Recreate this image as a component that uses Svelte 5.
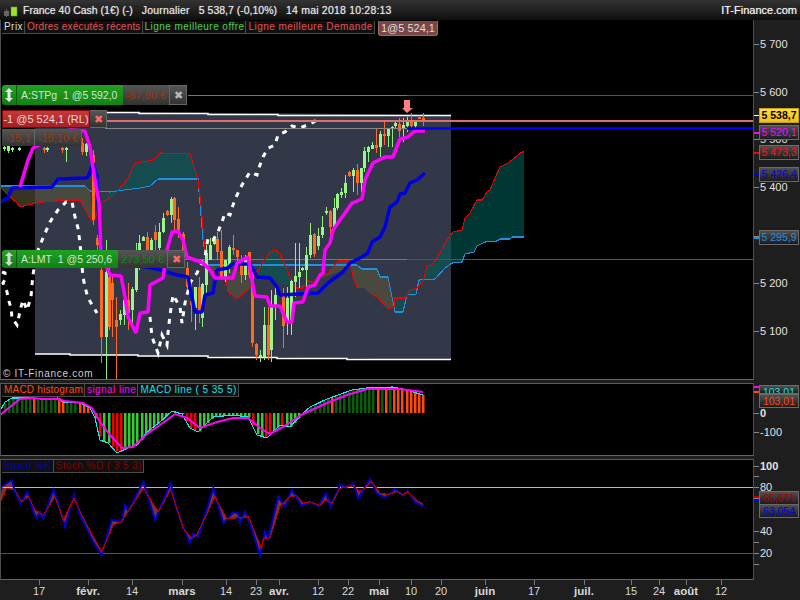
<script>
  const pl = (a) => a.map((p) => p.join(',')).join(' ');
  const senB = [[0,186],[85,186],[90,191],[110,192],[116,191],[140,188],[150,186],[158,179],[198,179],[200,203],[203,240],[207,265],[357,265],[362,269],[377,269],[380,277],[388,277],[395,312],[403,312],[407,295],[416,294],[419,280],[435,279],[445,268],[452,263],[462,262],[465,254],[474,252],[477,246],[485,242],[497,241],[500,239],[510,239],[512,237],[524,237]];
  const senA = [[0,187],[8,195],[17,203],[20,207],[27,205],[43,202],[70,200],[80,200],[88,215],[93,222],[102,202],[110,198],[120,188],[128,178],[133,167],[135,163],[153,160],[160,153],[190,154],[195,170],[198,180],[201,205],[204,240],[207,265],[212,272],[225,272],[228,292],[237,299],[250,288],[255,275],[270,252],[275,250],[280,254],[287,270],[295,288],[303,288],[308,280],[315,284],[322,275],[328,273],[338,261],[350,261],[353,277],[357,287],[365,288],[370,293],[377,297],[388,309],[394,307],[395,298],[405,298],[410,290],[417,288],[423,282],[427,266],[432,265],[440,253],[447,240],[453,232],[462,230],[465,218],[470,213],[477,200],[482,200],[487,192],[490,190],[495,178],[500,167],[508,163],[522,152],[524,152]];
  const cloud = (a, b) => pl([...senA.filter((p) => p[0] >= a && p[0] <= b), ...senB.filter((p) => p[0] >= a && p[0] <= b).reverse()]);
  const clouds = [
    { pts: cloud(0, 94), teal: false }, { pts: cloud(94, 207), teal: true },
    { pts: cloud(207, 255), teal: false }, { pts: cloud(255, 295), teal: true },
    { pts: cloud(295, 394), teal: false }, { pts: cloud(394, 524), teal: true }
  ];
  const kijun = [[20,187],[28,160],[33,148],[70,130],[85,131],[90,147],[93,168],[99,203],[101,253],[110,275],[121,276],[125,297],[128,317],[136,333],[140,313],[148,312],[150,285],[163,278],[167,250],[172,232],[178,231],[183,240],[187,257],[203,263],[210,270],[215,278],[233,278],[237,263],[248,257],[252,280],[255,296],[267,297],[270,306],[280,306],[283,313],[287,322],[292,322],[294,303],[303,302],[308,287],[315,285],[320,275],[323,273],[325,250],[330,243],[333,230],[345,213],[352,203],[362,199],[365,180],[373,163],[385,157],[393,157],[400,139],[408,137],[415,131],[425,131]];
  const tenkan = [[0,202],[8,198],[12,188],[52,187],[58,179],[85,178],[88,177],[93,163],[97,177],[98,200],[100,237],[103,262],[140,266],[157,269],[177,275],[188,277],[195,312],[202,312],[205,295],[213,293],[217,270],[228,268],[232,264],[250,264],[257,277],[270,278],[277,287],[280,295],[318,293],[328,283],[343,272],[350,263],[362,257],[368,253],[372,242],[380,237],[385,227],[390,207],[397,202],[400,194],[405,193],[410,183],[417,180],[425,173]];
  const chikouA = [[2,272],[5,273],[6,278],[3,283],[7,292],[8,298],[11,308],[12,318],[17,325],[21,307],[23,300],[27,310],[31,297],[32,285],[33,275],[36,255],[43,238],[50,222],[58,210],[66,202],[72,202],[75,217],[78,228],[80,243],[83,277],[85,287],[88,298],[97,313]];
  const chikouB = [[150,317],[152,337],[158,353],[162,335],[167,345],[168,333],[170,315],[173,295],[180,307],[182,323],[185,303],[190,283],[197,273],[205,257],[208,238],[213,240],[218,232],[222,222],[225,213],[230,215],[233,205],[237,195],[242,185],[250,172],[257,175],[260,165],[263,157],[268,148],[275,145],[278,135],[285,132],[292,126],[300,128],[312,123],[320,118]];
  const top = [[35,111.5],[70,111.5],[70,112.5],[139,112.5],[139,113.5],[208,113.5],[208,114.5],[278,114.5],[278,115.5],[451,115.5]];
  const bottom = [[35,354],[70,354],[70,355],[138,355],[138,356],[208,356],[208,357.5],[277,357.5],[277,358.5],[347,358.5],[347,359.5],[451,359.5]];
  const area = pl([[35,111],[451,115],[451,360],[35,354]]);
  const candles = [
    [4,146,151,147,149,1],[8,143,153,145,151,1],[12,147,152,148,150,1],[19,147,151,148,150,1],[44,147,153,148,150,0],[47,147,152,148,150,1],[62,147,153,148,150,0],[66,147,162,148,150,1],[82,138,155,143,152,0],[86,143,156,144,152,1],
    [93,150,225,155,220,0],[97,235,250,238,245,0],[101,250,363,270,337,0],[105.7,240,380,272,337,1],[109,250,330,277,327,0],[112,277,337,283,300,0],[116,297,380,320,327,0],[120,310,325,314,320,1],[124,297,325,300,315,1],[128,283,330,300,313,0],[132,287,327,289,310,1],[136,243,292,268,290,1],[139,235,270,243,268,1],[143,236,241,237,241,1],[147,232,268,237,252,0],[151,238,255,240,250,1],[155,225,252,232,240,0],[159,223,252,232,248,1],[163,213,233,218,232,1],[167,210,216,211,215,0],[171,197,223,199,215,1],[174,197,230,198,220,0],[178,207,238,219,230,0],[183,232,262,234,250,0],[187,262,295,268,287,0],[191,283,322,301,305,0],[195,287,330,287,308,1],[199,277,323,287,313,0],[202,283,327,284,318,1],[206,245,293,253,285,1],[210,238,260,245,260,1],[214,238,245,239,244,1],[217,232,260,239,252,0],[221,230,280,251,277,0],[225,260,282,260,277,1],[229,245,273,247,265,1],[233,235,255,248,250,0],[237,250,262,250,257,0],[241,255,283,260,275,0],[245,255,280,258,275,1],[249,252,278,252,275,0],[252,270,347,273,343,0],[256,343,360,344,355,0],[260,350,362,355,357,1],[264,307,360,325,357,1],[268,307,360,325,355,0],[271,290,362,305,350,1],
    [275,288,320,295,305,1],[283,288,348,293,326,0],[287,287,335,298,323,1],[291,280,335,281,323,1],[295,243,297,276,282,1],[299,243,288,272,277,1],[302,267,271,268,270,1],[306,247,288,255,270,1],[310,223,258,235,255,1],[314,233,257,234,254,0],[318,228,250,236,246,1],[322,216,238,227,235,1],[326,207,215,211,213,1],[330,210,237,211,227,0],[334,198,227,208,227,1],[337,193,210,194,208,1],[341,188,198,192,195,1],[345,175,198,183,193,1],[349,171,177,172,176,0],[353,168,192,170,176,1],[357,164,195,170,183,0],[361,168,192,168,183,1],[364,147,172,151,168,1],[368,146,162,147,152,1],[372,142,149,145,149,1],[376,129,153,145,148,0],[380,131,157,134,147,1],[384,122,145,134,136,0],[388,128,147,129,136,1],[392,126,147,127,129,1],[395,122,128,123,126,1],[399,118,137,124,131,0],[403,118,142,125,129,1],[407,117,132,122,126,1],[411,113,128,122,126,0],[415,120,130,122,126,1],[419,117,119,117,119,0],[423,113,126,118,121,0]
  ];
  const macd = [[0,411],[5,402],[12,398],[30,398],[40,399],[58,398],[63,402],[80,403],[90,408],[95,418],[100,440],[108,443],[117,453],[128,448],[137,445],[147,432],[160,422],[172,411],[182,414],[190,428],[198,432],[213,417],[233,415],[248,417],[257,435],[267,438],[280,425],[290,427],[303,413],[310,407],[327,399],[352,390],[367,388],[393,387],[407,390],[423,395]];
  const signal = [[0,415],[10,407],[20,399],[33,398],[43,399],[58,399],[65,401],[83,403],[92,408],[100,422],[110,435],[122,448],[133,447],[147,434],[160,425],[175,414],[187,418],[200,428],[217,422],[233,418],[248,418],[260,428],[270,434],[283,427],[303,414],[327,403],[347,395],[367,389],[400,389],[423,392]];
  const at = (x) => {
    for (let i = 1; i < macd.length; i++) {
      if (x <= macd[i][0]) {
        const [a, b] = [macd[i - 1], macd[i]];
        return a[1] + ((x - a[0]) * (b[1] - a[1])) / (b[0] - a[0]);
      }
    }
    return 395;
  };
  const zero = 413;
  const orangeRuns = [[30,37],[55,62],[75,90],[330,332],[357,359],[375,377],[383,385],[391,425]];
  const redRuns = [[99,101],[111,121],[184,197],[250,256],[264,269],[281,283]];
  const inRuns = (r, x) => r.some(([a, b]) => x >= a && x <= b);
  const bars = [];
  for (let x = 4; x <= 424; x += 4.14) {
    const y = at(x);
    if (Math.abs(y - zero) < 0.5) continue;
    const fill = inRuns(orangeRuns, x) ? '#ff4a0a' : inRuns(redRuns, x) ? '#f00000' : y > zero ? '#33cc33' : x > 300 || x < 100 ? '#0a5c0a' : '#33cc33';
    bars.push({ x: Math.round(x), y: Math.min(y, zero), h: Math.abs(y - zero), fill });
  }
  const z1 = (a) => a.map(([X, Y]) => [X / 3, 375 + Y / 3]);
  const z2 = (a) => a.map(([X, Y]) => [260 + X / 3, 375 + Y / 3]);
  const stK = [...z1([[0,360],[5,335],[35,315],[45,350],[62,385],[82,350],[100,410],[110,430],[120,410],[130,430],[160,345],[175,385],[195,455],[222,358],[240,420],[280,500],[305,540],[335,435],[365,440],[375,390],[385,408],[430,320],[465,435],[512,325],[530,405],[570,505],[580,475],[595,485],[640,340],[670,445],[700,412],[715,415],[720,445],[735,410],[755,460],[780,540]]), ...z2([[15,470],[25,490],[55,365],[75,395],[95,345],[125,392],[150,382],[175,392],[198,355],[212,395],[240,330],[262,335],[280,325],[295,370],[330,312],[350,355],[375,368],[405,342],[430,362],[442,347],[465,380],[490,395]])];
  const stD = [...z1([[0,385],[20,340],[45,345],[65,380],[85,365],[105,405],[130,420],[165,365],[190,435],[222,370],[250,430],[305,530],[340,450],[365,440],[385,408],[430,340],[475,410],[512,345],[550,460],[575,490],[590,480],[645,365],[680,430],[730,428],[745,425],[785,520]]), ...z2([[10,490],[30,490],[60,395],[90,365],[110,362],[130,385],[150,380],[180,392],[195,375],[215,385],[240,340],[280,332],[300,350],[335,320],[360,355],[385,358],[410,350],[430,360],[442,350],[470,375],[490,388]])];
  const stFill = pl([...stK, ...[...stD].reverse()]);
  const mainTicks = [
    { y: 44, t: '5 700' }, { y: 92, t: '5 600' }, { y: 139, t: '5 500' }, { y: 187, t: '5 400' }, { y: 236, t: '5 300' }, { y: 283, t: '5 200' }, { y: 331, t: '5 100' }
  ];
  const mainBoxes = [
    { y: 114.5, t: '5 538,7', c: 'yellow', tick: '#fff' }, { y: 132, t: '5 520,1', c: 'magenta', tick: '#f0f' }, { y: 152, t: '5 473,3', c: 'red', tick: '#f00' }, { y: 174, t: '5 426,4', c: 'blue', tick: '#00d' }, { y: 237, t: '5 295,9', c: 'sky', tick: '#1e90e0' }
  ];
  const dates = [
    [39,'17',0],[88,'févr.',1],[132,'14',0],[182,'mars',1],[226,'14',0],[256,'23',0],[279,'avr.',1],[318,'12',0],[348,'22',0],[379,'mai',1],[411,'10',0],[441,'20',0],[485,'juin',1],[534,'17',0],[584,'juil.',1],[631,'15',0],[659,'24',0],[686,'août',1],[721,'12',0]
  ];
  const stochTicks = [[466,'100',1],[476,'',0],[487,'80',0],[498,'',0],[531,'40',0],[542,'',0],[553,'20',0],[564,'',0]];
</script>

<div class="app">
  <header class="title">
    <svg class="logo" width="20" height="20" viewBox="0 0 20 20">
      <rect x="4" y="11" width="5" height="5" fill="#666" />
      <rect x="6" y="9" width="1" height="8" fill="#666" />
      <rect x="14" y="3" width="1" height="15" fill="#222" />
      <rect x="11" y="7" width="6" height="9" fill="#9be22d" stroke="#5a9a10" stroke-width="0.5" />
    </svg>
    <span>France 40 Cash (1€) (-)</span>
    <span class="wide">Journalier</span>
    <span>5 538,7 (-0,10%)</span>
    <span class="wide">14 mai 2018 10:28:13</span>
    <span class="brand">IT-Finance.com</span>
  </header>

  <section class="pane main">
    <div class="plot">
      <svg width="752" height="359" viewBox="1 20 752 359">
        <polygon points={area} fill="#333849" />
        {#each clouds as c}
          <polygon points={c.pts} fill={c.teal ? 'rgba(0,90,85,.6)' : 'rgba(88,84,58,.62)'} />
        {/each}
        <polyline points={pl(top)} class="edge" />
        <polyline points={pl(bottom)} class="edge" />
        <line x1="188" x2="407" y1="95.5" y2="95.5" stroke="#777" />
        <line x1="407" x2="753" y1="95.5" y2="95.5" stroke="#1f7a1f" />
        <line x1="118" x2="407" y1="259.5" y2="259.5" stroke="#777" />
        <line x1="407" x2="753" y1="259.5" y2="259.5" stroke="#1f7a1f" />
        <polyline points={pl(senB)} class="thin" stroke="#1e90e0" />
        <polyline points={pl(senA)} class="thin" stroke="#f00000" />
        {#each candles as [x, wt, wb, bt, bb, up]}
          <rect x={Math.round(x)} y={wt} width="1" height={wb - wt} fill={up ? '#8ff07a' : '#ff6a1e'} />
          <rect x={Math.round(x) - 1} y={bt} width="3" height={Math.max(bb - bt, 2)} fill={up ? '#9cf58a' : '#ff6a1e'} />
        {/each}
        <polyline points={pl(chikouA)} class="chikou" />
        <polyline points={pl(chikouB)} class="chikou" />
        <polyline points={pl(tenkan)} class="thick" stroke="#0000dd" />
        <polyline points={pl(kijun)} class="thick" stroke="#ff00ff" />
        <line x1="106" x2="753" y1="120.5" y2="120.5" stroke="#e07070" />
        <line x1="106" x2="753" y1="121.5" y2="121.5" stroke="#5bb05b" />
        <line x1="105" x2="407" y1="128.5" y2="128.5" stroke="#888" />
        <line x1="407" x2="753" y1="128.5" y2="128.5" stroke="#0000ff" stroke-width="2.5" />
        <polygon points="404,100 410,100 410,108 413,108 407,113 402,108 404,108" fill="#ff7f7f" />
      </svg>

      <div class="legend">
        <span class="prix">Prix</span>
        <span class="rec tight">Ordres exécutés récents</span>
        <span class="offer">Ligne meilleure offre</span>
        <span class="rec">Ligne meilleure Demande</span>
      </div>
      <div class="fill-tag">1@5 524,1</div>

      <div class="order stp">
        <span class="grip">
          <svg width="12" height="14" viewBox="0 0 12 14"><path d="M6 0 10 4H7.500V10H10L6 14 2 10H4.500V4H2Z" fill="#e8e8e8" /></svg>
        </span>
        <span class="ogreen stp-text">A:STPg&nbsp; 1 @5 592,0</span>
        <span class="pnl loss stp-pnl">-67,90 €</span>
        <span class="close grey">✖</span>
      </div>

      <div class="order pos">
        <span class="ored">-1 @5 524,1 (RL)</span>
        <span class="close pink">✖</span>
      </div>
      <div class="order pos2">
        <span class="pnl loss w1">-15,1</span>
        <span class="pnl loss w2">-15,10 €</span>
      </div>

      <div class="order lmt">
        <span class="grip">
          <svg width="12" height="14" viewBox="0 0 12 14"><path d="M6 0 10 4H7.500V10H10L6 14 2 10H4.500V4H2Z" fill="#d8d8d8" /></svg>
        </span>
        <span class="ogreen lmt-text">A:LMT&nbsp; 1 @5 250,6</span>
        <span class="pnl gain lmt-pnl">273,50 €</span>
        <span class="close pink">✖</span>
      </div>

      <div class="copyright">© IT-Finance.com</div>
    </div>
    <div class="axis">
      {#each mainTicks as t}
        <div class="tick" style="top:{t.y - 20}px"><i></i><span>{t.t}</span></div>
      {/each}
      {#each mainBoxes as b}
        <i class="mark" style="top:{b.y - 20}px;background:{b.tick}"></i>
        <div class="vbox {b.c}" style="top:{b.y - 20 - 7}px">{b.t}</div>
      {/each}
    </div>
  </section>

  <section class="pane macd">
    <div class="plot">
      <svg width="752" height="71" viewBox="1 384 752 71">
        {#each bars as b}
          <rect x={b.x} y={b.y} width="2.500" height={b.h} fill={b.fill} />
        {/each}
        <polyline points={pl(macd)} class="thin" stroke="#19e8e8" />
        <polyline points={pl(signal)} class="mid" stroke="#ff00ff" />
      </svg>
      <div class="legend low">
        <span class="mh tight">MACD histogram</span>
        <span class="sl">signal line</span>
        <span class="ml">MACD line ( 5 35 5)</span>
      </div>
    </div>
    <div class="axis">
      <i class="mark" style="top:3px;background:#f0f"></i>
      <i class="mark" style="top:8px;background:#ff4a0a"></i>
      <div class="vbox cyan" style="top:2px">103,01</div>
      <div class="vbox orange" style="top:11px">103,01</div>
      <div class="tick" style="top:30px"><i></i><span class="b">0</span></div>
      <div class="tick" style="top:49px"><i></i><span>-100</span></div>
    </div>
  </section>

  <section class="pane stoch">
    <div class="plot">
      <svg width="752" height="119" viewBox="1 460 752 119">
        <polygon points={stFill} fill="#7a3333" />
        <line x1="0" x2="753" y1="487.500" y2="487.500" stroke="#7fff00" />
        <line x1="0" x2="753" y1="553.500" y2="553.500" stroke="#a83a00" />
        <polyline points={pl(stK)} class="stk" stroke="#0000cc" />
        <polyline points={pl(stD)} class="thin" stroke="#b00000" />
      </svg>
      <div class="legend low">
        <span class="k">Stoch %K</span>
        <span class="d">Stoch %D ( 3 5 3)</span>
      </div>
    </div>
    <div class="axis">
      {#each stochTicks as [y, t, b]}
        <div class="tick" style="top:{y - 459}px"><i></i><span class:b>{t}</span></div>
      {/each}
      <i class="mark" style="top:37px;background:#c00000"></i>
      <i class="mark" style="top:41px;background:#0000dd"></i>
      <div class="vbox dred" style="top:32px">65,871</div>
      <div class="vbox dblue" style="top:45px">63,054</div>
    </div>
  </section>

  <footer class="dates">
    {#each dates as [x, t, b]}
      <div class="date" style="left:{x}px"><i></i><span class:b>{t}</span></div>
    {/each}
  </footer>
</div>

<style>
  :global(body) { margin: 0; background: #1e1e1e; }
  .app {
    width: 800px; height: 600px; overflow: hidden; display: flex; flex-direction: column;
    background: #1e1e1e; font-family: "Liberation Sans", Arial, sans-serif; color: #ddd;
  }
  .title {
    height: 20px; display: flex; align-items: center; gap: 9px; flex: none; position: relative;
    background: linear-gradient(#333, #0e0e0e); font-size: 10.500px; color: #e4e4e4;
    white-space: nowrap; text-shadow: 0 0 1px #aaa;
  }
  .logo { margin-right: -6px; flex: none; }
  .wide { letter-spacing: 0.2px; }
  .brand { margin-left: auto; margin-right: 3px; font-size: 11px; color: #f2f2f2; }
  .pane { display: flex; flex: none; }
  .main { height: 360px; }
  .macd { height: 73px; margin-top: 3px; }
  .stoch { height: 121px; margin-top: 3px; }
  .plot {
    width: 752px; position: relative; background: #000; border: 1px solid #4e4e4e; border-bottom-color: #666;
    border-top: 0; overflow: hidden; flex: none;
  }
  .macd .plot, .stoch .plot { border-top: 1px solid #5a5a5a; }
  .plot svg { display: block; }
  .thin { shape-rendering: crispEdges; }
  .axis { flex: 1; position: relative; }
  .tick { position: absolute; left: 0; height: 0; display: flex; align-items: center; font-size: 11px; color: #e2e2e2; white-space: nowrap; }
  .tick i { width: 5px; height: 1px; background: #888; margin-right: 1px; flex: none; }
  .b { font-weight: bold; }
  .mark { position: absolute; left: 0; width: 5px; height: 1.500px; }
  .vbox {
    position: absolute; left: 5px; width: 38px; height: 13px; line-height: 13px; text-align: center;
    font-size: 10.500px; border: 1px solid #6a6a6a; white-space: nowrap; overflow: hidden;
    background: linear-gradient(#505050, #1c1c1c);
  }
  .yellow { background: linear-gradient(#ffe040, #f2bf10); color: #000; font-weight: bold; border-color: #c8a010; z-index: 2; }
  .magenta { color: #ff00ff; }
  .red { color: #ff1010; }
  .blue { color: #0000e0; }
  .sky { color: #1e90e0; }
  .cyan { color: #10e0e0; height: 7px; }
  .orange { color: #ff4a0a; height: 12px; }
  .dred { color: #a00000; height: 12px; line-height: 12px; }
  .dblue { color: #0000e0; height: 12px; line-height: 12px; }
  .edge { fill: none; stroke: #fff; stroke-width: 1.500; }
  .thin { fill: none; stroke-width: 1.100; }
  .stk { fill: none; stroke-width: 2; }
  .mid { fill: none; stroke-width: 2; }
  .thick { fill: none; stroke-width: 3.500; stroke-linejoin: bevel; }
  .chikou { fill: none; stroke: #fff; stroke-width: 3; stroke-dasharray: 5 6; }
  .legend {
    position: absolute; left: 1px; top: 1px; display: flex; height: 13px; font-size: 10px; letter-spacing: 0.45px;
    white-space: nowrap;
  }
  .legend.low { top: 0; }
  .legend span {
    padding: 0 1px 0 2px; line-height: 12px; border: 1px solid #4c4c4c; border-top: 0; background: #101010; border-left: 0;
  }
  .legend .tight { letter-spacing: 0.2px; }
  .prix { color: #ddd; }
  .rec { color: #e85050; }
  .offer { color: #4ed04e; }
  .mh { color: #ff4a0a; }
  .sl { color: #ff00ff; }
  .ml { color: #14e0e0; }
  .k { color: #0000c0; }
  .d { color: #8a0000; }
  .fill-tag {
    position: absolute; left: 377px; top: 1px; width: 58px; height: 14px; line-height: 14px; text-align: center; white-space: nowrap;
    font-size: 11px; color: #ddd; background: #7a4646; border: 1px solid #a06868; border-top: 0; border-radius: 0 0 3px 3px;
  }
  .order { position: absolute; left: 1px; display: flex; font-size: 11px; white-space: nowrap; }
  .order > span { display: flex; align-items: center; justify-content: center; box-sizing: border-box; }
  .stp { top: 65px; height: 20px; }
  .pos { top: 90px; height: 18px; }
  .pos2 { top: 109px; height: 17px; }
  .lmt { top: 230px; height: 18px; }
  .grip { width: 15px; background: linear-gradient(#2aa02a, #0f7a0f); border-right: 1px solid #0a5a0a; border-radius: 3px 0 0 3px; }
  .order .ogreen { background: linear-gradient(#22a022, #118211); color: #cfe8cf; justify-content: flex-start; padding-left: 4px; font-size: 10.500px; }
  .stp-text { width: 106px; }
  .lmt-text { width: 101px; }
  .pnl { background: linear-gradient(#555, #333); border-right: 1px solid #666; }
  .loss { color: #9c3a08; }
  .gain { color: #0c8a0c; }
  .stp-pnl { width: 47px; }
  .lmt-pnl { width: 50px; }
  .w1 { width: 33px; }
  .w2 { width: 47px; }
  .close { width: 17px; background: linear-gradient(#555, #333); border: 1px solid #666; border-left: 0; }
  .grey { color: #b8b8b8; }
  .pink { color: #ff6a6a; }
  .ored {
    width: 88px; background: linear-gradient(#c43a3a, #a81e24); color: #e8d8d8; border: 1px solid #7c0808;
  }
  .copyright { position: absolute; left: 2px; bottom: 0; font-size: 10px; letter-spacing: 0.7px; color: #cfcfcf; }
  .dates { position: relative; flex: 1; }
  .date { position: absolute; top: 0; width: 0; display: flex; flex-direction: column; align-items: center; font-size: 11px; color: #d8d8d8; }
  .date i { width: 1px; height: 5px; background: #777; flex: none; }
  .date .b { font-size: 11.500px; }
</style>
